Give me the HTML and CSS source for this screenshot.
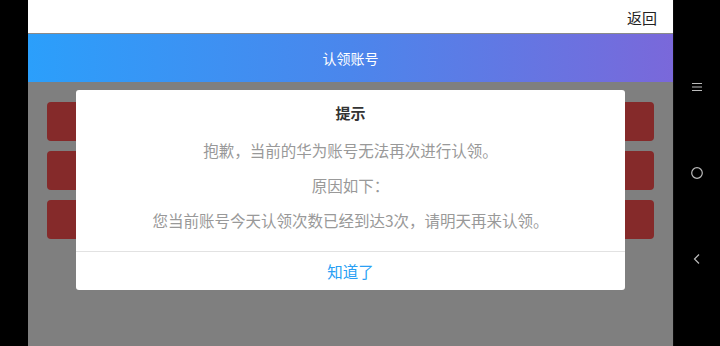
FILE: index.html
```html
<!DOCTYPE html>
<html lang="zh-CN">
<head>
    <meta charset="UTF-8">
    <meta name="viewport" content="width=device-width, initial-scale=1.0">
    <title>认领账号</title>
    <link rel="stylesheet" href="styles.css">
</head>
<body>

<div class="device">
    <div class="edge"></div>

    <div class="screen">
        <div class="topbar">
            <span class="back">返回</span>
        </div>
        <div class="header">认领账号</div>

        <div class="content">
            <div class="list">
                <div class="item"></div>
                <div class="item"></div>
                <div class="item"></div>
            </div>

            <div class="dialog">
                <div class="dialog-title">提示</div>
                <div class="dialog-body">
                    <p>抱歉，当前的华为账号无法再次进行认领。</p>
                    <p>原因如下：</p>
                    <p>您当前账号今天认领次数已经到达3次，请明天再来认领。</p>
                </div>
                <div class="dialog-footer">知道了</div>
            </div>
        </div>
    </div>

    <div class="navbar">
        <svg class="nav-icon" width="14" height="14" viewBox="0 0 14 14">
            <path d="M2 3.5h10M2 7h10M2 10.5h10" stroke="#bbb" stroke-width="1.2" fill="none"/>
        </svg>
        <svg class="nav-icon" width="14" height="14" viewBox="0 0 14 14">
            <circle cx="7" cy="7" r="5.3" stroke="#bbb" stroke-width="1.2" fill="none"/>
        </svg>
        <svg class="nav-icon" width="14" height="14" viewBox="0 0 14 14">
            <path d="M9 2.5L4.5 7L9 11.5" stroke="#bbb" stroke-width="1.2" fill="none"/>
        </svg>
    </div>
</div>

</body>
</html>
```

FILE: styles.css
```css
body {
    margin: 0;
    background-color: #000;
    font-family: "Noto Sans CJK SC", "Noto Sans", sans-serif;
}
.device {
    display: flex;
    width: 720px;
    height: 346px;
    overflow: hidden;
}
.edge {
    width: 28px;
    background-color: #000;
}
.screen {
    width: 646px;
    display: flex;
    flex-direction: column;
}
.topbar {
    height: 33px;
    background-color: #fff;
    border-bottom: 1px solid #8a8a8a;
    display: flex;
    align-items: center;
    justify-content: flex-end;
    padding-right: 16px;
}
.back {
    font-size: 15px;
    color: #222;
    margin-top: 2px;
}
.header {
    height: 48px;
    background: linear-gradient(to right, #2b9ffb, #4b86ec 50%, #7a68da);
    color: #fff;
    font-size: 14px;
    display: flex;
    align-items: center;
    justify-content: center;
}
.content {
    flex: 1;
    position: relative;
    background-color: #7f7f7f;
}
.list {
    display: flex;
    flex-direction: column;
    gap: 10px;
    padding: 20px 19px 0;
}
.item {
    height: 39px;
    background-color: #852a2a;
    border-radius: 4px;
}
.dialog {
    position: absolute;
    left: 48px;
    top: 8px;
    width: 549px;
    background-color: #fff;
    border-radius: 3px;
    text-align: center;
}
.dialog-title {
    padding-top: 13px;
    line-height: 20px;
    font-size: 15px;
    font-weight: bold;
    color: #333;
}
.dialog-body {
    padding: 10px 20px 13px;
}
.dialog-body p {
    margin: 0;
    line-height: 35px;
    font-size: 15.5px;
    color: #999;
}
.dialog-footer {
    border-top: 1px solid #e2e2e2;
    height: 38px;
    line-height: 38px;
    font-size: 15.5px;
    color: #2a9ff4;
}
.navbar {
    width: 46px;
    display: flex;
    flex-direction: column;
    align-items: center;
    padding-top: 80px;
    gap: 72px;
    border-left: 1px solid #0c0c0c;
}
.nav-icon {
    display: block;
}
```
